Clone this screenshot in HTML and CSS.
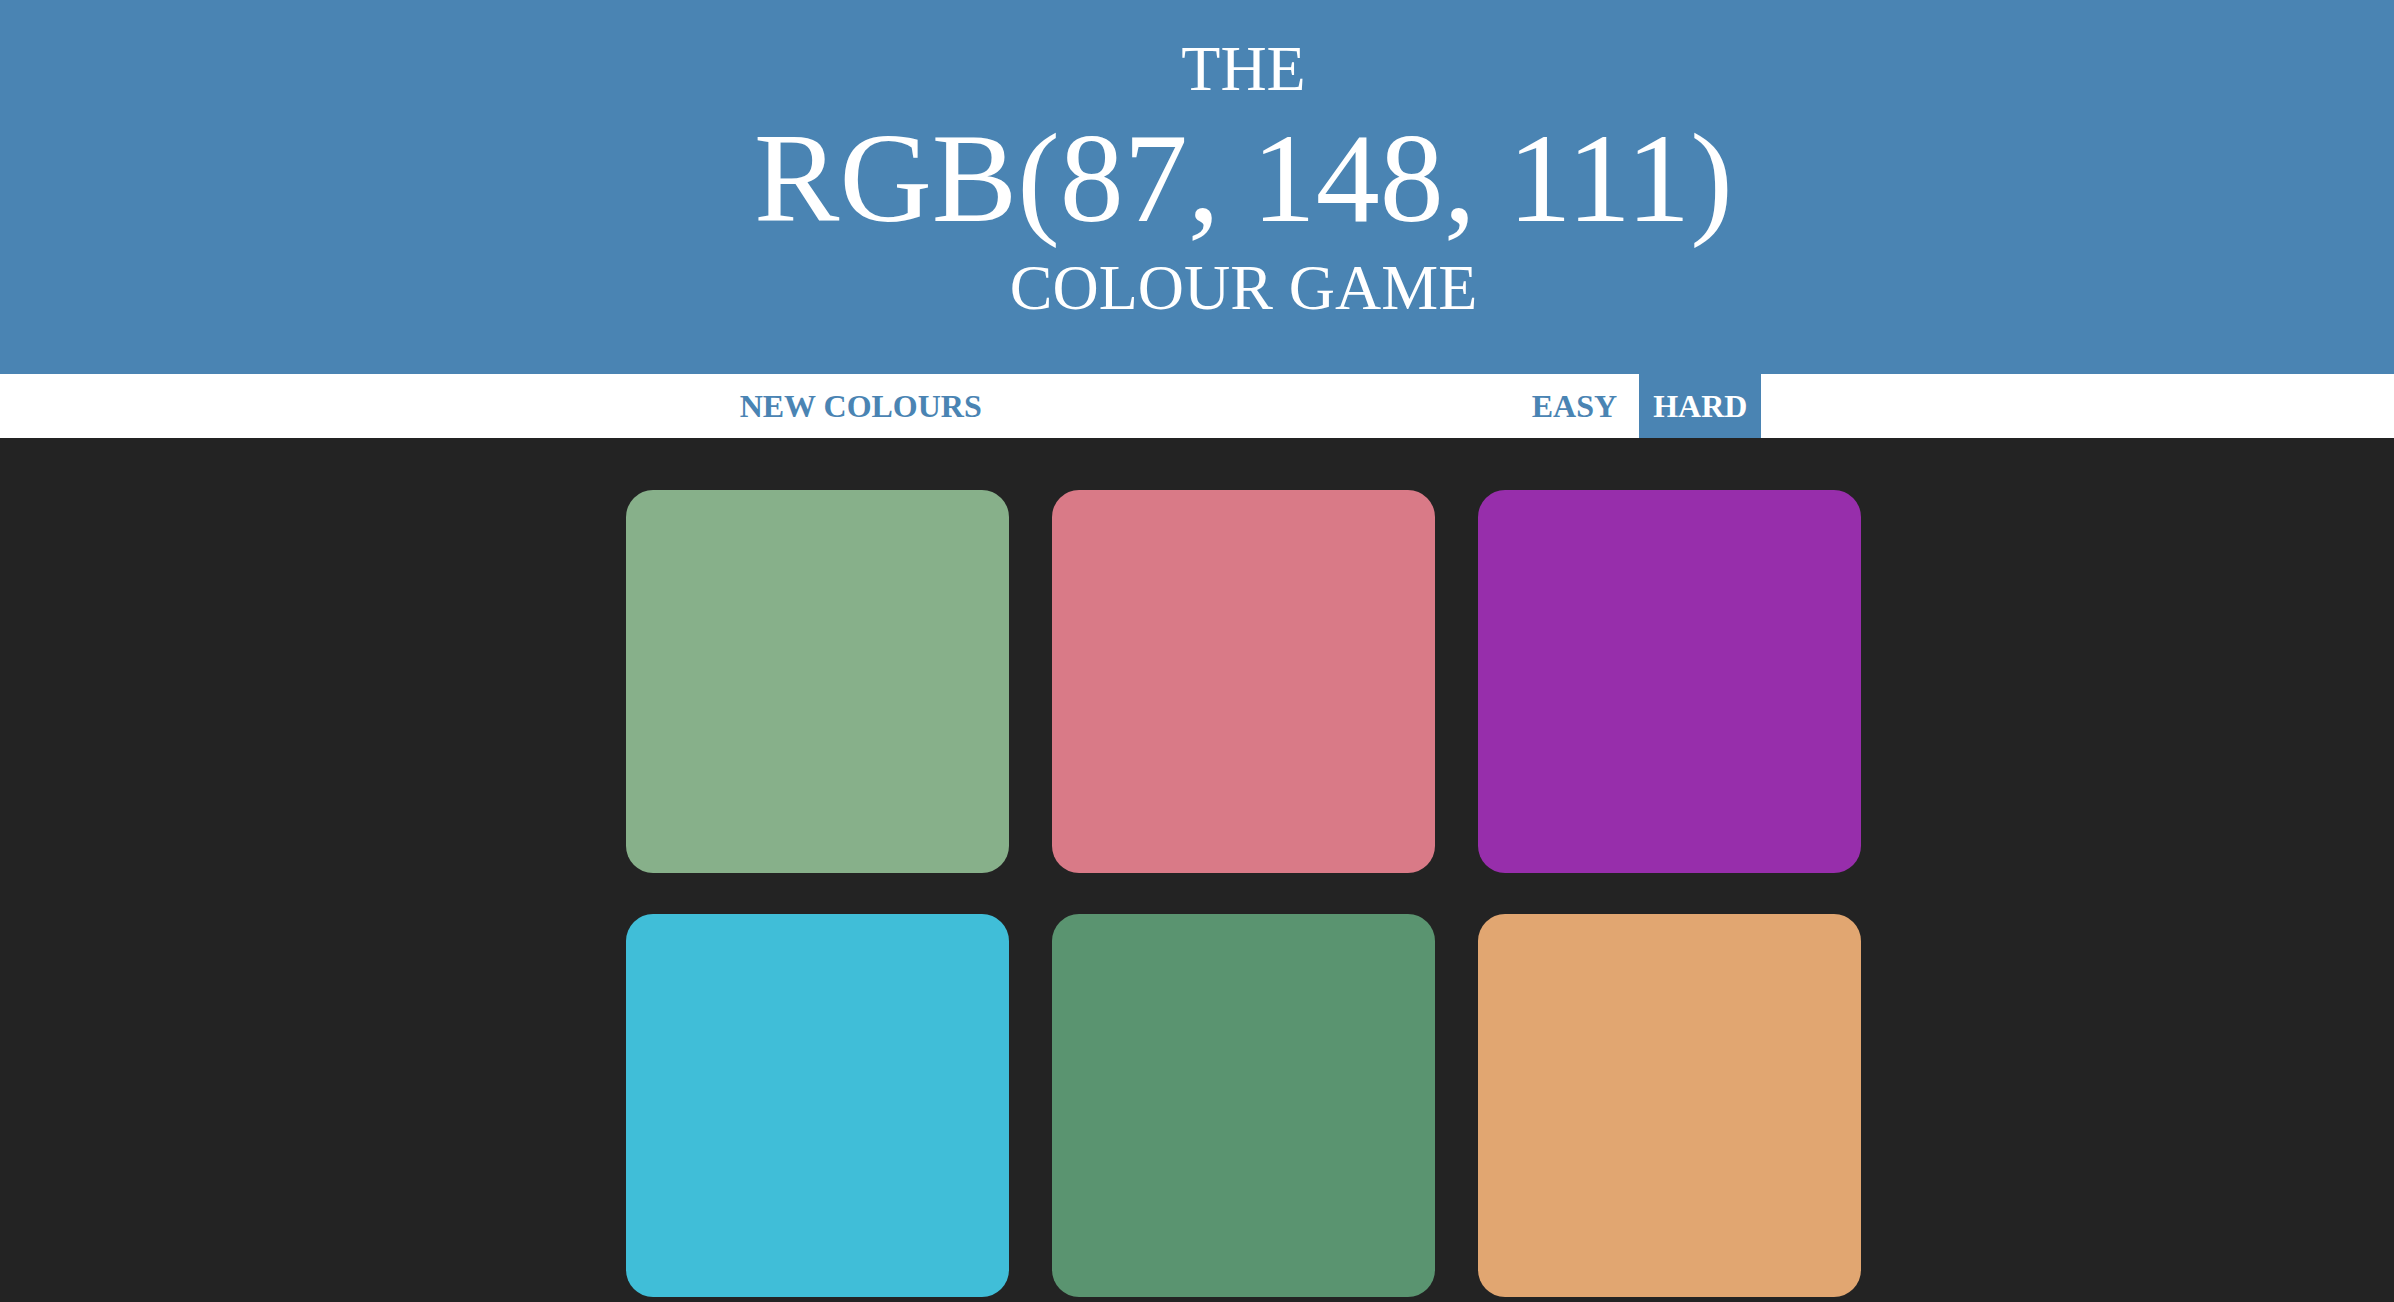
FILE: index.html
```html
<!DOCTYPE html>
<html lang="en">
<head>
<meta charset="utf-8">
<title>Colour Game</title>
<link rel="stylesheet" href="styles.css">
</head>
<body>
<header class="title">
  <h1 class="heading">
    <span class="line line-small">The</span>
    <span class="line line-big" id="colourDisplay">RGB(87, 148, 111)</span>
    <span class="line line-bottom">Colour Game</span>
  </h1>
</header>
<nav class="stripe">
  <button class="btn btn-reset">New Colours</button>
  <span class="message"></span>
  <button class="btn btn-mode">Easy</button>
  <button class="btn btn-mode selected">Hard</button>
</nav>
<main class="board">
  <div class="square sq-1"></div>
  <div class="square sq-2"></div>
  <div class="square sq-3"></div>
  <div class="square sq-4"></div>
  <div class="square sq-5"></div>
  <div class="square sq-6"></div>
</main>
</body>
</html>
```

FILE: styles.css
```css
html {
  background: #232323;
}

body {
  margin: 0;
  background: #232323;
  font-family: "Liberation Serif", "Times New Roman", serif;
  overflow: hidden;
}

.title {
  background: #4a84b3;
  color: #ffffff;
  padding: 37px 0 53px 93px;
  text-align: center;
}

.heading {
  margin: 0;
  font-weight: normal;
  text-transform: uppercase;
}

.line {
  display: block;
}

.line-small {
  font-size: 64px;
  line-height: 64px;
}

.line-big {
  font-size: 128px;
  line-height: 154px;
}

.line-bottom {
  font-size: 64px;
  line-height: 66px;
}

.stripe {
  background: #ffffff;
  height: 64px;
  display: flex;
  justify-content: center;
  padding-left: 93px;
}

.btn {
  border: none;
  background: #ffffff;
  color: #4a84b3;
  font-family: "Liberation Serif", "Times New Roman", serif;
  font-weight: bold;
  font-size: 32px;
  line-height: 64px;
  height: 64px;
  padding: 0 14px;
  margin: 0;
  text-transform: uppercase;
  cursor: pointer;
}

.btn-mode {
  margin-left: 8px;
}

.message {
  display: block;
  width: 506px;
  margin: 0 0 0 8px;
}

.btn.selected {
  background: #4a84b3;
  color: #ffffff;
}

.board {
  display: grid;
  grid-template-columns: repeat(3, 383px);
  column-gap: 43px;
  row-gap: 41px;
  justify-content: center;
  padding: 52px 0 0 93px;
}

.square {
  width: 383px;
  height: 383px;
  border-radius: 27px;
}

.sq-1 { background: #87b08a; }
.sq-2 { background: #d97a87; }
.sq-3 { background: #972eab; }
.sq-4 { background: #40bed8; }
.sq-5 { background: #5a9470; }
.sq-6 { background: #e1a671; }
```
